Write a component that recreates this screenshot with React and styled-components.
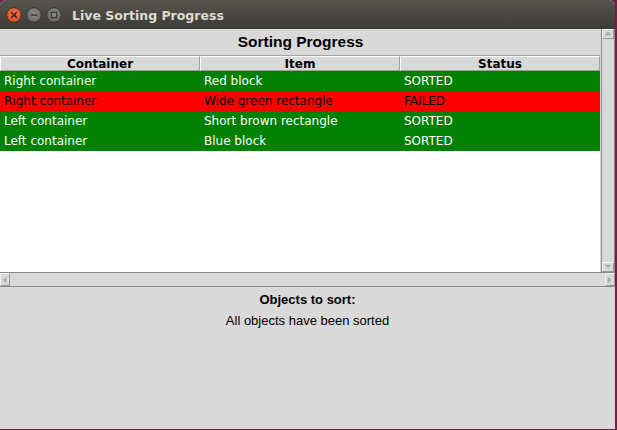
import React from "react";
import styled, { createGlobalStyle } from "styled-components";

const GlobalStyle = createGlobalStyle`
  html, body {
    margin: 0;
    padding: 0;
    background: #6e2146;
  }
`;

const rows = [
  { container: "Right container", item: "Red block", status: "SORTED" },
  { container: "Right container", item: "Wide green rectangle", status: "FAILED" },
  { container: "Left container", item: "Short brown rectangle", status: "SORTED" },
  { container: "Left container", item: "Blue block", status: "SORTED" },
];

const Window = styled.div`
  width: 615px;
  height: 429px;
  display: flex;
  flex-direction: column;
  background: #d9d9d9;
  border-radius: 6px 6px 0 0;
  overflow: hidden;
`;

const TitleBar = styled.div`
  height: 29px;
  flex: none;
  display: flex;
  align-items: center;
  padding-left: 6px;
  background: linear-gradient(#57554f, #3c3b37);
`;

const Controls = styled.div`
  display: flex;
  align-items: center;
  gap: 4px;
  width: 66px;
`;

const Title = styled.div`
  font-family: "DejaVu Sans", sans-serif;
  font-weight: bold;
  font-size: 12.5px;
  color: #dfdbd2;
  padding-top: 1px;
`;

const Body = styled.div`
  flex: 1;
  display: flex;
  flex-direction: column;
`;

const ScrollArea = styled.div`
  display: flex;
  height: 243px;
`;

const TablePane = styled.div`
  width: 601px;
  display: flex;
  flex-direction: column;
`;

const Heading = styled.div`
  height: 26px;
  flex: none;
  display: flex;
  align-items: center;
  justify-content: center;
  font-family: "Liberation Sans", Arial, sans-serif;
  font-weight: bold;
  font-size: 15.5px;
  color: #000;
  box-sizing: border-box;
`;

const HeadRow = styled.div`
  width: 600px;
  flex: none;
  display: grid;
  grid-template-columns: repeat(3, 200px);
  height: 16px;
  box-sizing: border-box;
  border-top: 1px solid #a3a3a3;
`;

const HeadCell = styled.div`
  box-sizing: border-box;
  background: #d9d9d9;
  border-top: 1px solid #ffffff;
  border-left: 1px solid #ffffff;
  border-right: 1px solid #9e9e9e;
  border-bottom: 1px solid #9e9e9e;
  display: flex;
  align-items: center;
  justify-content: center;
  font-family: "DejaVu Sans", sans-serif;
  font-weight: bold;
  font-size: 12px;
  color: #000;
  line-height: 1;
`;

const Grid = styled.div`
  flex: 1;
  width: 600px;
  background: #fff;
  display: grid;
  grid-template-columns: repeat(3, 200px);
  grid-auto-rows: 20px;
  align-content: start;
`;

const Cell = styled.div`
  background: ${(p) => (p.$failed ? "#ff0000" : "#008000")};
  color: ${(p) => (p.$failed ? "#000000" : "#ffffff")};
  font-family: "DejaVu Sans", sans-serif;
  font-size: 12px;
  display: flex;
  align-items: center;
  padding-left: 4px;
  white-space: nowrap;
`;

const VScroll = styled.div`
  width: 14px;
  box-sizing: border-box;
  border-left: 1px solid #8a8a8a;
  border-right: 1px solid #8a8a8a;
  background: #d9d9d9;
  display: flex;
  flex-direction: column;
  justify-content: space-between;
`;

const HScroll = styled.div`
  height: 15px;
  box-sizing: border-box;
  border-top: 1px solid #8a8a8a;
  border-bottom: 1px solid #8a8a8a;
  display: flex;
  justify-content: space-between;
  background: #d9d9d9;
`;

const Arrow = styled.div`
  width: ${(p) => (p.$horizontal ? "10px" : "12px")};
  height: ${(p) => (p.$horizontal ? "13px" : "10px")};
  box-sizing: border-box;
  border: 1px solid;
  border-color: #f4f4f4 #9a9a9a #9a9a9a #f4f4f4;
  display: flex;
  align-items: center;
  justify-content: center;
`;

const Panel = styled.div`
  flex: 1;
  display: flex;
  flex-direction: column;
  align-items: center;
  padding-top: 2px;
  font-family: "Liberation Sans", Arial, sans-serif;
  font-size: 13px;
  color: #000;
`;

const PanelTitle = styled.div`
  font-weight: bold;
  height: 21px;
  line-height: 21px;
`;

const PanelText = styled.div`
  height: 21px;
  line-height: 21px;
`;

function WinButton({ kind }) {
  if (kind === "close") {
    return (
      <svg width="16" height="16" viewBox="0 0 16 16">
        <defs>
          <radialGradient id="cg" cx="50%" cy="40%" r="60%">
            <stop offset="0" stopColor="#f7794c" />
            <stop offset="1" stopColor="#df4a1c" />
          </radialGradient>
        </defs>
        <circle cx="8" cy="8" r="7.3" fill="url(#cg)" stroke="#3a2a22" strokeWidth="0.8" />
        <path d="M5.6 5.6 L10.4 10.4 M10.4 5.6 L5.6 10.4" stroke="#3c2a22" strokeWidth="1.5" strokeLinecap="round" />
      </svg>
    );
  }
  return (
    <svg width="16" height="16" viewBox="0 0 16 16">
      <defs>
        <radialGradient id="gg" cx="50%" cy="40%" r="60%">
          <stop offset="0" stopColor="#8c8a84" />
          <stop offset="1" stopColor="#6b6964" />
        </radialGradient>
      </defs>
      <circle cx="8" cy="8" r="7.3" fill="url(#gg)" stroke="#2e2d2a" strokeWidth="0.8" />
      {kind === "min" ? (
        <path d="M4.8 8 H11.2" stroke="#3a3935" strokeWidth="1.6" />
      ) : (
        <rect x="5.3" y="5.3" width="5.4" height="5.4" fill="none" stroke="#3a3935" strokeWidth="1.3" />
      )}
    </svg>
  );
}

function Tri({ dir }) {
  const paths = {
    up: "M1 6 L4.5 2 L8 6 Z",
    down: "M1 2 L4.5 6 L8 2 Z",
    left: "M6 1 L2 4.5 L6 8 Z",
    right: "M2 1 L6 4.5 L2 8 Z",
  };
  return (
    <svg width="8" height="8" viewBox="0 0 9 9">
      <path d={paths[dir]} fill="#a6a6a6" />
    </svg>
  );
}

export default function App() {
  return (
    <>
      <GlobalStyle />
      <Window>
        <TitleBar>
          <Controls>
            <WinButton kind="close" />
            <WinButton kind="min" />
            <WinButton kind="max" />
          </Controls>
          <Title>Live Sorting Progress</Title>
        </TitleBar>
        <Body>
          <ScrollArea>
            <TablePane>
              <Heading>Sorting Progress</Heading>
              <HeadRow>
                <HeadCell>Container</HeadCell>
                <HeadCell>Item</HeadCell>
                <HeadCell>Status</HeadCell>
              </HeadRow>
              <Grid>
                {rows.map((r, i) => (
                  <React.Fragment key={i}>
                    <Cell $failed={r.status === "FAILED"}>{r.container}</Cell>
                    <Cell $failed={r.status === "FAILED"}>{r.item}</Cell>
                    <Cell $failed={r.status === "FAILED"}>{r.status}</Cell>
                  </React.Fragment>
                ))}
              </Grid>
            </TablePane>
            <VScroll>
              <Arrow>
                <Tri dir="up" />
              </Arrow>
              <Arrow>
                <Tri dir="down" />
              </Arrow>
            </VScroll>
          </ScrollArea>
          <HScroll>
            <Arrow $horizontal>
              <Tri dir="left" />
            </Arrow>
            <Arrow $horizontal>
              <Tri dir="right" />
            </Arrow>
          </HScroll>
          <Panel>
            <PanelTitle>Objects to sort:</PanelTitle>
            <PanelText>All objects have been sorted</PanelText>
          </Panel>
        </Body>
      </Window>
    </>
  );
}
